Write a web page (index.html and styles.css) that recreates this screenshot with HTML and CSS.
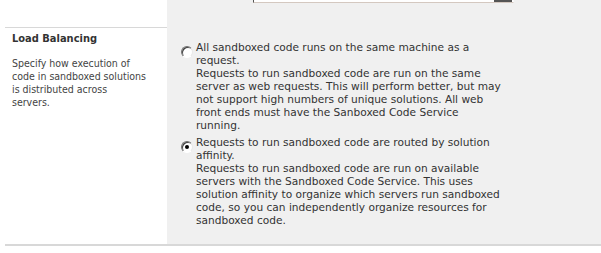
FILE: index.html
```html
<!DOCTYPE html>
<html lang="en">
<head>
<meta charset="UTF-8">
<title>Load Balancing</title>
<link rel="stylesheet" href="styles.css">
</head>
<body>
<div class="section prev">
    <div class="label-cell"></div>
    <div class="body-cell">
        <div class="input-tail">
            <span class="input-btn"></span>
        </div>
    </div>
</div>

<div class="section">
    <div class="label-cell first-line">
        <h3>Load Balancing</h3>
        <p>Specify how execution of code in sandboxed solutions is distributed across<br>servers.</p>
    </div>
    <div class="body-cell">
        <div class="options">
            <label class="option">
                <input type="radio" name="lb">
                <span>All sandboxed code runs on the same machine as a request.<br>
                Requests to run sandboxed code are run on the same server as web requests. This will perform better, but may not support high numbers of unique solutions. All web front ends must have the Sanboxed Code Service running.</span>
            </label>
            <label class="option">
                <input type="radio" name="lb" checked>
                <span>Requests to run sandboxed code are routed by solution affinity.<br>
                Requests to run sandboxed code are run on available servers with the Sandboxed Code Service. This uses solution affinity to organize which servers run sandboxed code, so you can independently organize resources for sandboxed code.</span>
            </label>
        </div>
    </div>
</div>
<div class="section-end"></div>
</body>
</html>
```

FILE: styles.css
```css
body {
    margin: 0;
    background: #ffffff;
    font-family: "DejaVu Sans", Verdana, sans-serif;
    color: #333333;
}

.section {
    display: flex;
    margin-left: 5px;
}

.label-cell {
    width: 162px;
    flex-shrink: 0;
    box-sizing: border-box;
    padding: 0 18px 0 7px;
}

.body-cell {
    flex: 1;
    background-color: #f0f0f0;
}

.prev {
    height: 27px;
}

.input-tail {
    position: relative;
    width: 259px;
    height: 2px;
    margin-left: 86px;
    background: #ffffff;
    border-left: 1px solid #555555;
    border-bottom: 1px solid #d4c8c0;
    border-right: 1px solid #f8f8f8;
}

.input-btn {
    position: absolute;
    right: 1px;
    top: 0;
    width: 18px;
    height: 2px;
    background: #555555;
}

.first-line {
    border-top: 1px solid #d8d8d8;
}

.label-cell h3 {
    margin: 4px 0 0;
    font-family: "DejaVu Sans Condensed", "DejaVu Sans", sans-serif;
    font-size: 11px;
    font-weight: bold;
    color: #333333;
}

.label-cell p {
    margin: 12px 0 0;
    font-family: "DejaVu Sans Condensed", "DejaVu Sans", sans-serif;
    font-size: 10.5px;
    line-height: 13px;
    color: #444444;
}

.options {
    padding: 14px 0 17px 9px;
    display: flex;
    flex-direction: column;
    gap: 4px;
}

.option {
    display: flex;
    align-items: flex-start;
    font-size: 10.6px;
    line-height: 13px;
    color: #333333;
}

.option span {
    width: 306px;
}

.option input {
    appearance: none;
    -webkit-appearance: none;
    position: relative;
    box-sizing: border-box;
    margin: 5px 3px 0 5px;
    width: 12px;
    height: 12px;
    flex-shrink: 0;
    border-radius: 50%;
    border: 1px solid;
    border-color: #707070 #e8e8e8 #ffffff #707070;
    background: #ffffff;
    box-shadow: inset 1px 1px 0 #404040;
}

.option input:checked::after {
    content: "";
    position: absolute;
    left: 3px;
    top: 3px;
    width: 4px;
    height: 4px;
    border-radius: 50%;
    background: #000000;
}

.section-end {
    margin-left: 5px;
    height: 8px;
    border-top: 2px solid #d8d8d8;
}
```
